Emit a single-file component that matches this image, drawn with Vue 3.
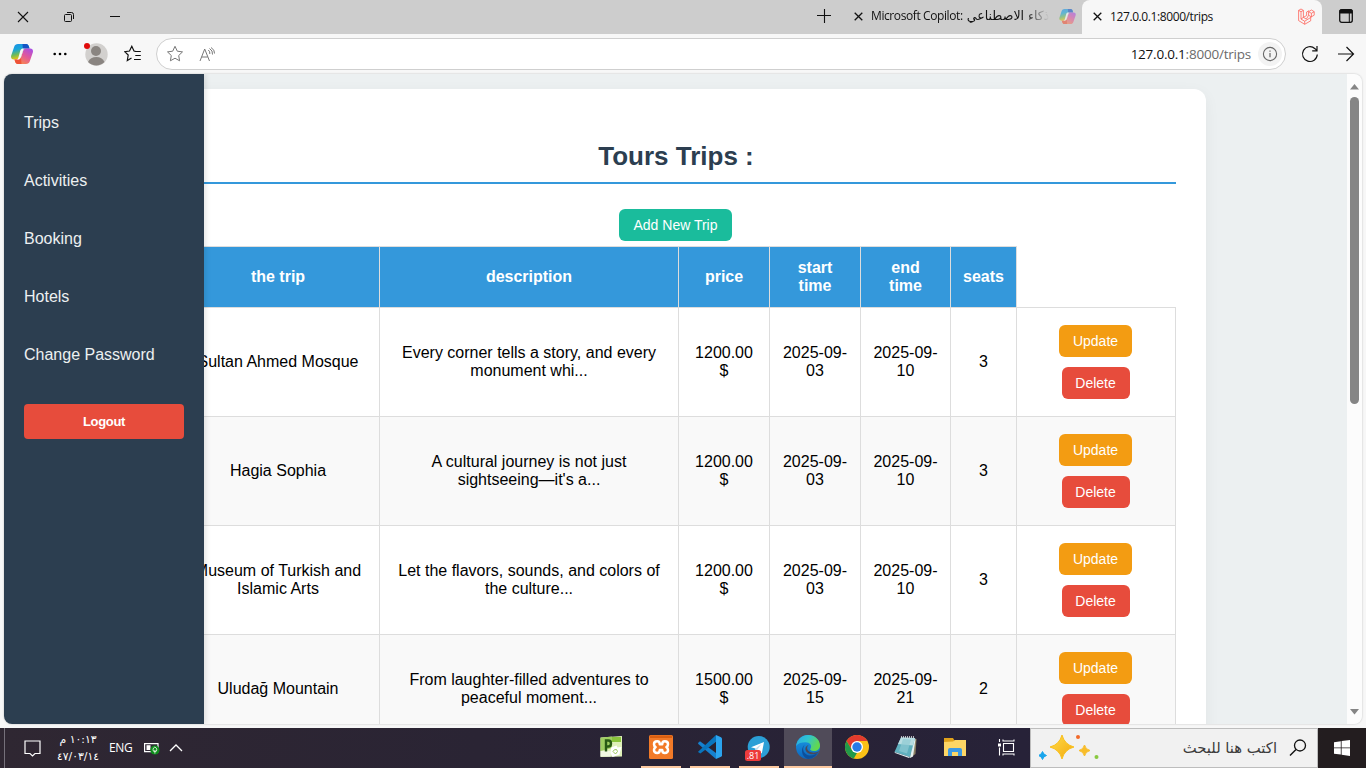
<script setup>
const links = ['Trips', 'Activities', 'Booking', 'Hotels', 'Change Password']
const heads = ['the trip', 'description', 'price', 'start\ntime', 'end\ntime', 'seats']
const rows = [
  ['Sultan Ahmed Mosque', 'Every corner tells a story, and every\nmonument whi...', '1200.00\n$', '2025-09-\n03', '2025-09-\n10', '3'],
  ['Hagia Sophia', "A cultural journey is not just\nsightseeing—it's a...", '1200.00\n$', '2025-09-\n03', '2025-09-\n10', '3'],
  ['Museum of Turkish and\nIslamic Arts', 'Let the flavors, sounds, and colors of\nthe culture...', '1200.00\n$', '2025-09-\n03', '2025-09-\n10', '3'],
  ['Uludağ Mountain', 'From laughter-filled adventures to\npeaceful moment...', '1500.00\n$', '2025-09-\n15', '2025-09-\n21', '2'],
]
</script>

<template>
  <div class="screen">
    <svg class="defs" width="0" height="0">
      <defs>
        <linearGradient id="cpTop" x1="0" y1="0" x2="0.3" y2="1">
          <stop offset="0" stop-color="#1a8fe8" /><stop offset=".4" stop-color="#19a5d8" /><stop offset=".7" stop-color="#6fbb5a" /><stop offset="1" stop-color="#f2c60c" />
        </linearGradient>
        <linearGradient id="cpBot" x1="1" y1="0" x2="0.3" y2="1">
          <stop offset="0" stop-color="#a04cf0" /><stop offset=".5" stop-color="#e0589c" /><stop offset="1" stop-color="#fb8a4a" />
        </linearGradient>
        <linearGradient id="edgeA" x1="0" y1="0" x2="1" y2=".4">
          <stop offset="0" stop-color="#2aa6e8" /><stop offset=".5" stop-color="#2fc4d0" /><stop offset="1" stop-color="#62d84e" />
        </linearGradient>
        <linearGradient id="edgeB" x1="0" y1="0" x2="0" y2="1">
          <stop offset="0" stop-color="#1c9be6" /><stop offset="1" stop-color="#0c66bd" />
        </linearGradient>
        <linearGradient id="gold" x1="0" y1="0" x2="1" y2="1">
          <stop offset="0" stop-color="#ffdc4a" /><stop offset="1" stop-color="#f3a80c" />
        </linearGradient>
        <symbol id="copilot" viewBox="0 0 22 20">
          <path d="M7 0h8.2c1.5 0 2.2 1 2.700 2.500l.6 2h-3.600c-1.500 0-2.400.8-2.900 2.300l-2.100 6.200C9.200 15 8.200 15.500 6.500 15.500H2.800C.5 15.500-.4 13.800.2 11.500L3.200 2.700C3.800.9 5 0 7 0z" fill="url(#cpTop)" />
          <path d="M11.500 0h3.700c1.500 0 2.200 1 2.700 2.500l.6 2h-3.600c-1.500 0-2.400.8-2.900 2.300z" fill="#1554c4" />
          <path d="M15 20H6.800c-1.500 0-2.200-1-2.700-2.500l-.6-2h3.600c1.500 0 2.400-.8 2.900-2.300l2.100-6.200c.7-2 1.700-2.500 3.400-2.500h3.700c2.300 0 3.200 1.700 2.600 4L18.800 17.300C18.200 19.100 17 20 15 20z" fill="url(#cpBot)" />
          <path d="M10.500 20H6.800c-1.500 0-2.200-1-2.700-2.500l-.6-2h3.600c1.500 0 2.400-.8 2.900-2.300z" fill="#ee5238" />
          <path d="M9.300 6.600c.6-1.500 1.500-2.100 3-2.100h2.600c-1.500 0-2.400.8-2.900 2.300l-2.100 6.200c-.7 1.900-1.700 2.500-3.200 2.500H5.500c1 0 1.500-.8 2-2.200z" fill="#f7f7f7" />
        </symbol>
      </defs>
    </svg>

    <header class="tabs">
      <div class="winctl">
        <svg width="12" height="12" viewBox="0 0 12 12"><path d="M1 1l10 10M11 1L1 11" stroke="#111" stroke-width="1.1" /></svg>
        <svg width="12" height="12" viewBox="0 0 12 12"><path d="M2.500 3.500h5q1 0 1 1v5q0 1-1 1h-5q-1 0-1-1v-5q0-1 1-1zM4 1.500h4.500q2 0 2 2V8" fill="none" stroke="#111" /></svg>
        <svg width="12" height="12" viewBox="0 0 12 12"><path d="M1 5.500h10" stroke="#111" /></svg>
      </div>
      <svg class="plus" width="16" height="16" viewBox="0 0 16 16"><path d="M1 7.500h14M8.500 1v14" stroke="#111" stroke-width="1.100" /></svg>
      <div class="tab">
        <svg width="9" height="9" viewBox="0 0 9 9"><path d="M.7.7l7.600 7.600M8.300.7L.7 8.300" stroke="#111" stroke-width="1.300" /></svg>
        <span class="tabtext copilot-title"><span class="latin">Microsoft Copilot:</span><span class="arabic" dir="rtl">ذكاء الاصطناعي</span></span>
        <svg class="fav faded" width="17" height="15"><use href="#copilot" /></svg>
      </div>
      <div class="tab active">
        <svg width="9" height="9" viewBox="0 0 9 9"><path d="M.7.7l7.600 7.600M8.300.7L.7 8.300" stroke="#111" stroke-width="1.300" /></svg>
        <span class="tabtext">127.0.0.1:8000/trips</span>
        <svg class="fav" width="17" height="17" viewBox="0 0 17 17"><g fill="none" stroke="#ff5b52" stroke-width=".75" stroke-linejoin="round"><path d="M.6 2.400L3 1l2.400 1.400v7l3.200-1.900V4L11 2.700M.6 2.400L3 3.700l2.400-1.300M.6 2.400v10.200l6.100 3.700 6-3.500V9.200l3.500-2V3.700L13.500 2 10.600 3.700v3.500l2.700 1.700M3 3.700v7.400l3.700 2.100v3M5.400 9.400L3 11M6.700 13.200l6-3.700M10.600 3.700l2.800 1.600 2.800-1.600M13.400 5.300v3.600M5.400 9.400l3 1.700 2.200-3.900" /></g></svg>
      </div>
      <svg class="tabmenu" width="14" height="14" viewBox="0 0 14 14"><rect x=".7" y=".7" width="12.600" height="12.600" rx="2" fill="none" stroke="#111" stroke-width="1.300" /><path d="M1 1h12v3H1z" fill="#111" stroke="#111" /><path d="M10.300 4v9" stroke="#111" /></svg>
    </header>

    <nav class="toolbar">
      <svg class="t-cp" width="22" height="20"><use href="#copilot" /></svg>
      <svg class="t-dots" width="14" height="4" viewBox="0 0 14 4"><circle cx="1.700" cy="2" r="1.300" /><circle cx="7" cy="2" r="1.300" /><circle cx="12.300" cy="2" r="1.300" /></svg>
      <svg class="t-user" width="24" height="24" viewBox="0 0 24 24"><circle cx="12.500" cy="12.500" r="11.200" fill="#d2d0ce" /><circle cx="12" cy="9" r="5" fill="#8a8581" /><path d="M4 20c1.500-3.500 4.500-5 8.300-5s6.700 1.500 8.200 5c-4.500 4.500-12 4.500-16.500 0z" fill="#8a8581" /><circle cx="3" cy="4" r="3" fill="#e00b0b" /></svg>
      <svg class="t-fav" width="18" height="18" viewBox="0 0 18 18"><path d="M11.500 6.300L10 6 7.800 1.300 5.500 6l-4.800.7L4.200 10l-.9 5.500L7.500 13M11.300 6.500h5.500M11.300 10.500h5.500M10 14.500h6.800" fill="none" stroke="#111" stroke-width="1.200" /></svg>
      <div class="address">
        <svg class="a-star" width="18" height="18" viewBox="0 0 18 18"><path d="M9 1.300l2.300 4.900 5.200.7-3.800 3.600.9 5.300L9 13.200l-4.600 2.600.9-5.300L1.500 6.900l5.200-.7z" fill="none" stroke="#777" stroke-width="1" stroke-linejoin="round" /></svg>
        <svg class="a-read" width="17" height="15" viewBox="0 0 17 15"><path d="M1 14L5.700 2 10.500 14M2.700 10h6M9.300 3q2 1.500 1.500 4M10.500 1.500q3.500 2 3 6M12 .5q4 2.500 3.500 6" fill="none" stroke="#777" stroke-width="1" /></svg>
        <div class="url"><b>127.0.0.1</b>:8000/trips</div>
        <div class="info"><svg width="16" height="16" viewBox="0 0 16 16"><circle cx="8" cy="8" r="6.600" fill="none" stroke="#666" stroke-width="1.100" /><path d="M8 7v4.200M8 4.400v1.300" stroke="#666" stroke-width="1.200" /></svg></div>
      </div>
      <svg class="t-re" width="18" height="18" viewBox="0 0 18 18"><path d="M16.300 9.500A7.400 7.400 0 1 1 14 3.700l2 2M16 1v4.800h-4.800" fill="none" stroke="#111" stroke-width="1.200" /></svg>
      <svg class="t-fw" width="18" height="16" viewBox="0 0 18 16"><path d="M1 8h15.500M9.500 1l7 7-7 7" fill="none" stroke="#111" stroke-width="1.200" /></svg>
    </nav>

    <div class="frame">
      <div class="page">
        <main class="container">
          <h1>Tours Trips :</h1>
          <div class="center"><button class="btn add">Add New Trip</button></div>
          <table>
            <colgroup><col class="c1"><col class="c2"><col class="c3"><col class="c3"><col class="c5"><col class="c6"><col class="c7"></colgroup>
            <thead><tr><th v-for="h in heads" :key="h">{{ h }}</th><th class="blank"></th></tr></thead>
            <tbody>
              <tr v-for="r in rows" :key="r[0]">
                <td v-for="(c, i) in r" :key="i">{{ c }}</td>
                <td class="last"><div class="acts"><button class="btn upd">Update</button><button class="btn del">Delete</button></div></td>
              </tr>
            </tbody>
          </table>
        </main>
      </div>
      <aside class="sidebar">
        <a v-for="l in links" :key="l">{{ l }}</a>
        <button class="logout">Logout</button>
      </aside>
      <div class="scroll">
        <svg width="9" height="6" viewBox="0 0 9 6"><path d="M4.500 0L9 5.500H0z" fill="#858585" /></svg>
        <div class="thumb"></div>
        <svg class="dn" width="9" height="6" viewBox="0 0 9 6"><path d="M4.500 5.500L9 0H0z" fill="#858585" /></svg>
      </div>
    </div>

    <footer class="taskbar">
      <div class="tray">
        <svg class="note" width="17" height="17" viewBox="0 0 17 17"><path d="M1 1h15v12.500h-5L8.500 16 6 13.500H1z" fill="none" stroke="#fff" stroke-width="1.200" /></svg>
        <div class="clock"><span class="time" dir="rtl">١٠:١٣ م</span><span dir="ltr">٤٧/٠٣/١٤</span></div>
        <span class="eng">ENG</span>
        <svg class="bat" width="16" height="14" viewBox="0 0 16 14"><path d="M.6 2.600h13.400v8H.6z" fill="none" stroke="#fff" stroke-width="1.200" /><path d="M2.500 4.200h4v4.800h-4z" fill="#fff" /><circle cx="10.900" cy="9" r="4.600" fill="#0e8d1b" /><path d="M10.900 12.500V9M9 8.800q0-2 1.900-2.800 1.900.8 1.900 2.800t-1.900 1.700q-1.900.3-1.900-1.700z" fill="none" stroke="#fff" stroke-width=".8" /></svg>
        <svg class="chev" width="14" height="8" viewBox="0 0 14 8"><path d="M1 7l6-6 6 6" fill="none" stroke="#fff" stroke-width="1.300" /></svg>
      </div>
      <div class="apps">
        <div class="app"><svg width="24" height="24" viewBox="0 0 24 24"><path d="M1.500 2.500L23 1v20.500L1.500 22z" fill="#dff0b9" /><path d="M12 2h10v5H12z" fill="#8ac43c" /><path d="M1.500 2.800L13 1.500V13L1.500 16z" fill="#9fce62" /><path d="M1.500 16h10v5.500h-10z" fill="#f1f8e2" /><path d="M7 16.500V5.500h2.300q2.700 0 2.700 3t-2.700 3H7" fill="none" stroke="#285a14" stroke-width="2.400" /><path d="M12 12.500l5.500-2 1 2 4-.5-2 7.500-7 2.500-2-4z" fill="#fff" /><path d="M14 16.500q1-2.500 3.500-2l1 2-2 2.500z" fill="none" stroke="#9ac65c" /></svg></div>
        <div class="app open"><svg width="24" height="24" viewBox="0 0 24 24"><rect width="24" height="24" rx="1.500" fill="#f27a28" /><path d="M1 .5h22v2.500H1z" fill="#d95e11" /><path d="M8.200 6.300q2.600 0 2.600 3h2.400q0-3 2.600-3 3.200 0 3.200 2.900 0 2-1.600 2.900 1.600.9 1.600 2.900 0 2.900-3.200 2.900-2.600 0-2.600-3h-2.400q0 3-2.600 3Q5 17.900 5 15q0-2 1.600-2.900Q5 11.200 5 9.200q0-2.900 3.200-2.900z" fill="none" stroke="#fff" stroke-width="2.500" stroke-linejoin="round" /></svg></div>
        <div class="app open"><svg width="24" height="24" viewBox="0 0 24 24"><path d="M0 8l2-1.700L18 18v6L.3 9z" fill="#1681cf" /><path d="M.3 16.500L18 0v7L2.300 18.500 0 17z" fill="#0975bd" /><path d="M18 0l5 2.200q1 .5 1 1.500v16.600q0 1-1 1.500L18 24z" fill="#2ba4ee" /><path d="M18 7l-6 5 6 5z" fill="#28222f" /></svg></div>
        <div class="app open"><svg class="tg" width="26" height="26" viewBox="0 0 26 26"><circle cx="14.700" cy="12" r="11" fill="#2b9fd6" /><path d="M7 12.200L20 7l-2.200 11.500-4-3-2 2-.3-4z" fill="#fff" /><path d="M11.500 13.500l6-4.500-4.200 5.800-1.500 2.700z" fill="#c3deec" /><rect x="1" y="15" width="16" height="11" rx="2.500" fill="#ed3b3b" /><text x="9" y="24" font-family="Open Sans, sans-serif" font-size="9" fill="#fff" text-anchor="middle">.81</text></svg></div>
        <div class="app open current"><svg width="24" height="24" viewBox="0 0 24 24"><circle cx="12" cy="12" r="12" fill="url(#edgeB)" /><path d="M.1 11C1 4.500 6 0 12 0c7 0 12 5 12 10.500 0 3.500-2.500 5.500-6 5.500-3 0-4.500-1.200-3.500-2.500 1.800-2.800-.5-6.300-5-6.300-4 0-7.500 1-9.400 3.800z" fill="url(#edgeA)" /><path d="M9 9.500c-4 4-1 11 5 11 3.500 0 6-1.200 8.200-3.200C19.500 22 16 24 12 24 5.500 22.500 4 13 9 9.500z" fill="#0e4f9a" /><path d="M12.700 10.300c-2 1-2.200 4.200.3 6 3 2.200 7.500 1.500 9.900 0l.3.500c-3.200 3-9 3.500-12 .8-3-2.800-2-6.800 1.500-7.300z" fill="#4d4855" /></svg></div>
        <div class="app"><svg width="24" height="24" viewBox="0 0 24 24"><circle cx="12" cy="12" r="12" fill="#fbc116" /><path d="M1.600 6A12 12 0 0 1 22.400 6H12L7 15z" fill="#e33b2e" /><path d="M1.600 6L7 15l5 3-3.200 5.600A12 12 0 0 1 1.600 6z" fill="#229a4a" /><circle cx="12" cy="12" r="6" fill="#fff" /><circle cx="12" cy="12" r="4.700" fill="#287be6" /></svg></div>
        <div class="app"><svg width="24" height="24" viewBox="0 0 24 24"><path d="M19 3l3.500 1-1 15-5 3.500-2-2z" fill="#8b8064" /><path d="M19 3l2.500 1.500-2.500 17-3 1.500z" fill="#e5f0f0" /><path d="M7 2.500l14 .5-5 19L.500 17z" fill="#5fb0be" /><path d="M7 2.500l14 .5-2 7.500L4 9z" fill="#b9dde2" /><path d="M9 4l8 .5-4 14L5 16z" fill="#8ecbd3" opacity=".7" /><path d="M.500 17L16 22l-1 1L1 18z" fill="#e0eef0" /><path d="M7 2h14" stroke="#e9e9e9" stroke-width="1.500" stroke-dasharray="1 1" /></svg></div>
        <div class="app"><svg width="22" height="20" viewBox="0 0 22 20"><path d="M0 1h9l1.500 2.500H22V19H0z" fill="#e0a21b" /><path d="M0 5l9-.5L11 3h11v16H0z" fill="#fdd665" /><path d="M4 19v-6q0-2 2-2h10q2 0 2 2v6h-4v-4H8v4z" fill="#3d9ae3" /></svg></div>
        <div class="app view"><svg width="17" height="17" viewBox="0 0 17 17"><path d="M5.500 4.500h10v8h-10zM5 .5v1.500h11V.5M5 16.500V15h11v1.500M1.500 0v3M1.500 8.500v8" fill="none" stroke="#fff" stroke-width="1.100" /><path d="M0 4.500h3v3H0z" fill="#fff" /></svg></div>
      </div>
      <div class="search">
        <svg width="64" height="30" viewBox="0 0 64 30"><path d="M23 2q2.500 9.500 12 12-9.500 2.500-12 12-2.500-9.500-12-12 9.500-2.500 12-12z" fill="url(#gold)" stroke="#f9c01f" stroke-linejoin="round" /><path d="M45.500 12q1 4.500 5.500 5.500-4.500 1-5.500 5.500-1-4.500-5.500-5.500 4.500-1 5.500-5.500z" fill="#f8bd2a" stroke="#f8bd2a" /><path d="M3.500 18.500q.8 3 4 4-3.200.8-4 4-.8-3.200-4-4 3.200-1 4-4z" fill="#19a5ec" stroke="#19a5ec" /><circle cx="39" cy="4" r="2" fill="#f26a2a" /><circle cx="57.500" cy="24" r="2" fill="#89c940" /></svg>
        <span dir="rtl">اكتب هنا للبحث</span>
        <svg class="mag" width="18" height="18" viewBox="0 0 18 18"><circle cx="11" cy="6.500" r="5.500" fill="none" stroke="#111" stroke-width="1.300" /><path d="M7 10.500L1 16.500" stroke="#111" stroke-width="1.400" /></svg>
      </div>
      <div class="start"><svg width="16" height="16" viewBox="0 0 16 16"><path d="M0 2.200L6.800 1.200v6.300H0zM7.600 1.100L16 0v7.500H7.600zM0 8.300h6.800v6.300L0 13.700zM7.600 8.300H16V16l-8.400-1.200z" fill="#fff" /></svg></div>
    </footer>
  </div>
</template>

<style>
body { margin: 0; overflow: hidden; }
</style>

<style scoped>
* { box-sizing: border-box; }
svg { display: block; flex: none; }
.defs { position: absolute; }
.screen { width: 1366px; height: 768px; display: flex; flex-direction: column; background: #f7f7f7; overflow: hidden; font-family: "Liberation Sans", Arial, sans-serif; }
.tabs { height: 34px; background: #cdcdcd; display: flex; align-items: center; flex: none; font-family: "Open Sans", "DejaVu Sans", sans-serif; font-size: 12px; color: #111; }
.winctl { display: flex; gap: 34px; padding-left: 17px; width: 816px; }
.plus { margin: -2px 15px 0 0; }
.tab { height: 34px; display: flex; align-items: center; padding: 0 5px 2px 7px; width: 235px; }
.tabtext { margin-left: 8px; flex: 1; white-space: nowrap; letter-spacing: -0.4px; }
.copilot-title { display: flex; align-items: center; gap: 4px; overflow: hidden; width: 178px; height: 24px; flex: none; -webkit-mask-image: linear-gradient(90deg, #000 86%, transparent); mask-image: linear-gradient(90deg, #000 86%, transparent); }
.arabic { font-family: "DejaVu Sans", sans-serif; font-size: 12.6px; line-height: 20px; letter-spacing: 0; flex: none; }
.latin { flex: none; line-height: 20px; }
.fav { margin-left: auto; }
.faded { opacity: .6; margin-right: 1px; }
.tab.active { width: 240px; background: #f7f7f7; border-radius: 8px 8px 0 0; padding: 0 7px 2px 11px; }
.tabmenu { margin: -2px 0 0 17px; }
.toolbar { height: 39px; display: flex; align-items: center; flex: none; padding-left: 11px; }
.t-dots { margin-left: 20px; }
.t-user { margin-left: 17px; }
.t-fav { margin-left: 16px; }
.address { width: 1130px; height: 32px; margin: 1px 0 0 14px; border: 1px solid #cfcfcf; border-radius: 16px; background: #fff; display: flex; align-items: center; padding: 0 3px 0 9px; flex: none; }
.a-read { margin-left: 15px; }
.url { margin-left: auto; font-family: "Open Sans", sans-serif; font-size: 13.5px; letter-spacing: -0.22px; color: #6b6b6b; }
.url b { font-weight: 400; color: #111; }
.info { width: 24px; height: 24px; border-radius: 12px; background: #f3f3f3; margin-left: 7px; display: flex; align-items: center; justify-content: center; }
.t-re { margin-left: 15px; }
.t-fw { margin-left: 18px; }
.frame { position: relative; width: 1358px; height: 650px; margin: 1px 0 0 4px; border-radius: 8px; overflow: hidden; background: #ecf0f1; display: flex; flex: none; box-shadow: 0 0 2px rgba(0,0,0,.25); }
.page { width: 1343px; height: 650px; overflow: hidden; padding: 15px 0 0 142px; flex: none; }
.container { width: 1060px; height: 900px; background: #fff; border-radius: 12px; padding: 49px 30px 0; box-shadow: 0 4px 15px rgba(0,0,0,.05); }
h1 { margin: 0; height: 46px; border-bottom: 2px solid #3498db; text-align: center; color: #2c3e50; font-size: 26px; line-height: 36px; font-weight: 700; }
.center { display: flex; justify-content: center; padding: 25px 1px 5px 0; }
.btn { border: 0; border-radius: 6px; height: 32px; padding: 0; color: #fff; font: 14px "Liberation Sans", Arial, sans-serif; display: block; }
.add { background: #1abc9c; width: 113px; }
table { width: 1000px; table-layout: fixed; border-collapse: separate; border-spacing: 0; font-size: 16px; line-height: 18px; color: #000; }
.c1 { width: 203px; } .c2 { width: 299px; } .c3 { width: 91px; } .c5 { width: 90px; } .c6 { width: 66px; } .c7 { width: 160px; }
th, td { border: solid #ddd; border-width: 1px 0 0 1px; padding: 0; text-align: center; vertical-align: middle; white-space: pre; }
th { height: 61px; background: #3498db; color: #fff; font-weight: 700; }
td { height: 109px; }
.blank { background: #fff; border-top: 0; }
.last { border-right-width: 1px; }
tbody tr:nth-child(even) { background: #f9f9f9; }
.acts { display: flex; flex-direction: column; align-items: center; gap: 10px; padding-right: 1px; }
.upd { background: #f39c12; width: 73px; }
.del { background: #e74c3c; width: 68px; }
.sidebar { position: absolute; left: 0; top: 0; width: 200px; height: 650px; background: #2c3e50; padding: 30px 20px; display: flex; flex-direction: column; box-shadow: 2px 0 5px rgba(0,0,0,.1); }
.sidebar a { color: #ecf0f1; font-size: 16px; line-height: 18px; padding: 10px 0; margin-bottom: 20px; height: 38px; flex: none; white-space: nowrap; }
.logout { height: 35px; margin-top: 10px; border: 0; border-radius: 4px; background: #e74c3c; color: #fff; font: 700 13px "Liberation Sans", Arial, sans-serif; letter-spacing: -0.35px; }
.scroll { width: 15px; height: 650px; background: #fcfcfc; display: flex; flex-direction: column; align-items: center; padding-top: 10px; }
.thumb { width: 9px; height: 307px; border-radius: 5px; background: #858585; margin-top: 7px; }
.dn { margin-top: auto; margin-bottom: 9px; }
.taskbar { height: 40px; margin-top: auto; display: flex; background: linear-gradient(90deg, #2f2732, #2a2434 35%, #272238 75%, #231d1f 97%); flex: none; color: #fff; }
.tray { width: 586px; display: flex; align-items: center; border-left: 1px solid #75707a; margin-left: 4px; padding-left: 19px; flex: none; }
.clock { width: 44px; margin-left: 15px; display: flex; flex-direction: column; align-items: center; font: 10.8px/17px "DejaVu Sans", sans-serif; white-space: nowrap; }
.time { letter-spacing: -0.4px; }
.eng { margin-left: 9px; font: 12px/16px "Open Sans", sans-serif; letter-spacing: -0.3px; margin-top: -1px; }
.bat { margin-left: 11px; }
.chev { margin-left: 9px; }
.apps { display: flex; flex: none; width: 440px; }
.app { width: 40px; margin: 0 9px 0 0; height: 40px; display: flex; align-items: center; justify-content: center; flex: none; border-bottom: 2px solid transparent; }
.app:first-child { margin-left: 1px; margin-right: 10px; }
.app.view { margin-right: 0; padding-left: 4px; }
.open { border-bottom-color: #fcc9a0; }
.tg { margin-right: 4px; margin-top: 2px; }
.current { background: #504b59; width: 48px; margin: 0 5px 0 -4px; }
.search { width: 288px; height: 40px; background: #f1f1f1; border: 1px solid #bdbdbd; display: flex; align-items: center; padding: 0 10px 0 8px; color: #3c3c3c; flex: none; }
.search span { margin-left: auto; font: 14.8px/20px "DejaVu Sans", sans-serif; white-space: nowrap; }
.mag { margin-left: 12px; }
.start { width: 48px; display: flex; align-items: center; justify-content: center; }
</style>
